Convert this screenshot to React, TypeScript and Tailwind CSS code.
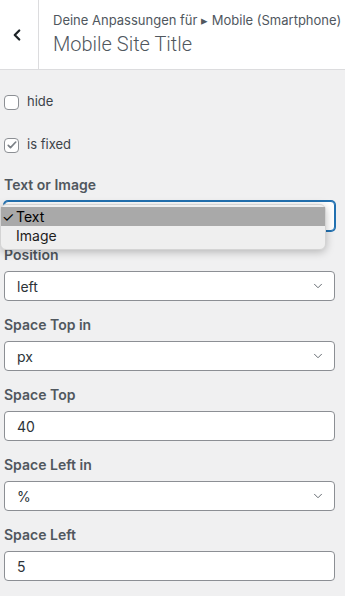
import { ChevronDown, ChevronLeft } from "lucide-react";

const FIELDS = [
  { label: "Position", kind: "select", value: "left" },
  { label: "Space Top in", kind: "select", value: "px" },
  { label: "Space Top", kind: "input", value: "40" },
  { label: "Space Left in", kind: "select", value: "%" },
  { label: "Space Left", kind: "input", value: "5" },
];

function Checkbox({ label, checked }: { label: string; checked?: boolean }) {
  return (
    <label className="flex items-center gap-[8px] h-4">
      <span className="w-[15px] h-[15px] rounded-[4px] border border-[#8c8f94] bg-white flex items-center justify-center">
        {checked && (
          <svg viewBox="0 0 16 16" className="w-[12px] h-[12px]">
            <path d="M3 8.5l3 3 7-7.5" fill="none" stroke="#7a7f85" strokeWidth="2.2" strokeLinecap="round" strokeLinejoin="round" />
          </svg>
        )}
      </span>
      <span className="text-[13px] text-[#3c434a]">{label}</span>
    </label>
  );
}

function FieldLabel({ children }: { children: string }) {
  return <div className="text-[14px] leading-[18px] font-semibold text-[#50575e] mb-[7px]">{children}</div>;
}

function SelectBox({ value, focused }: { value: string; focused?: boolean }) {
  return (
    <div
      className={`h-[30px] rounded-[4px] bg-white flex items-center justify-between pl-[12px] pr-[9px] border ${
        focused ? "border-[#2271b1] shadow-[0_0_0_1px_#2271b1]" : "border-[#8c8f94]"
      }`}
    >
      <span className="text-[14px] text-[#2c3338]">{value}</span>
      <ChevronDown className="w-[14px] h-[14px] text-[#50575e]" strokeWidth={1.5} />
    </div>
  );
}

function InputBox({ value }: { value: string }) {
  return (
    <div className="h-[30px] rounded-[4px] bg-white border border-[#8c8f94] flex items-center pl-[12px]">
      <span className="text-[14px] text-[#2c3338]">{value}</span>
    </div>
  );
}

export default function App() {
  return (
    <div className="w-[345px] h-[596px] overflow-hidden bg-[#f0f0f1] font-['Inter','Liberation_Sans',sans-serif]">
      <header className="h-[70px] bg-white border-b border-[#dcdcde] flex">
        <div className="w-[39px] border-r border-[#dcdcde] flex items-center justify-center">
          <ChevronLeft className="w-[18px] h-[18px] text-[#1d2327] -ml-[5px]" strokeWidth={3} />
        </div>
        <div className="pl-[14px] pt-[11px]">
          <div className="text-[13px] leading-[18px] text-[#50575e]">Deine Anpassungen für ▸ Mobile (Smartphone)</div>
          <div className="text-[20px] leading-[26px] font-light text-[#50575e] mt-[2px] font-['Roboto',sans-serif]">Mobile Site Title</div>
        </div>
      </header>

      <div className="pl-1 pr-[10px] pt-[24px]">
        <div className="mb-[27px]">
          <Checkbox label="hide" />
        </div>
        <div className="mb-[23px]">
          <Checkbox label="is fixed" checked />
        </div>

        <div className="mb-[15px]">
          <FieldLabel>Text or Image</FieldLabel>
          <div className="relative">
            <SelectBox value="Text" focused />
            <div className="absolute -left-1 top-[3px] w-[326px] rounded-[6px] bg-[#efefef] shadow-[0_2px_8px_rgba(0,0,0,0.25)] border border-[#d4d4d4] pt-[2px] pb-[4px] z-10">
              <div className="h-[19px] bg-[#a9a9a9] flex items-center text-[14px] text-black">
                <span className="w-[15px] pl-[1px]">✓</span>
                <span>Text</span>
              </div>
              <div className="h-[19px] flex items-center text-[14px] text-[#1d1d1d] pl-[15px]">Image</div>
            </div>
          </div>
        </div>

        {FIELDS.map((f) => (
          <div key={f.label} className="mb-[15px]">
            <FieldLabel>{f.label}</FieldLabel>
            {f.kind === "select" ? <SelectBox value={f.value} /> : <InputBox value={f.value} />}
          </div>
        ))}
      </div>
    </div>
  );
}
